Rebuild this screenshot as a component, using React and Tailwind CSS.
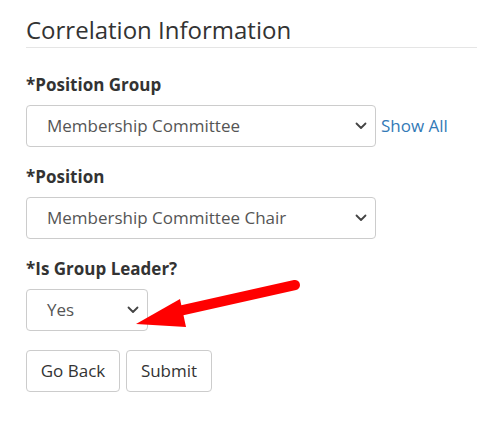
import React from 'react'

const Chevron = () => (
  <svg width="12" height="8" viewBox="0 0 12 8" className="absolute right-[8px] top-1/2 -translate-y-1/2">
    <path d="M1.5 1.5 L6 6 L10.5 1.5" fill="none" stroke="#444" strokeWidth="1.8" strokeLinecap="round" strokeLinejoin="round" />
  </svg>
)

const SelectBox = ({ value, width }) => (
  <div className={`relative h-[42px] ${width} rounded-[4px] border border-[#cccccc] bg-white flex items-center pl-[20px] text-[17px] text-[#555555]`}>
    {value}
    <Chevron />
  </div>
)

const Field = ({ label, children }) => (
  <div className="mb-[18px]">
    <div className="text-[17px] font-bold text-[#333333] leading-[24px] mb-[8px]">{label}</div>
    {children}
  </div>
)

export default function App() {
  return (
    <div className="relative w-[477px] h-[440px] bg-white pl-[26px] pt-[14px]" style={{ fontFamily: '"Open Sans", "Noto Sans", sans-serif' }}>
      <h2 className="text-[24px] font-normal text-[#333333] leading-[32px] pb-[1px] border-b border-[#e5e5e5]">
        Correlation Information
      </h2>
      <div className="pt-[25px]">
        <Field label="*Position Group">
          <div className="flex items-center">
            <SelectBox value="Membership Committee" width="w-[350px]" />
            <span className="ml-[5px] text-[17px] text-[#337ab7]">Show All</span>
          </div>
        </Field>
        <Field label="*Position">
          <SelectBox value="Membership Committee Chair" width="w-[350px]" />
        </Field>
        <Field label="*Is Group Leader?">
          <SelectBox value="Yes" width="w-[122px]" />
        </Field>
        <div className="flex gap-[6px] pt-[1px]">
          <button className="h-[42px] w-[94px] rounded-[4px] border border-[#cccccc] bg-white text-[17px] text-[#333333]">Go Back</button>
          <button className="h-[42px] w-[86px] rounded-[4px] border border-[#cccccc] bg-white text-[17px] text-[#333333]">Submit</button>
        </div>
      </div>
      <svg className="absolute left-0 top-0 pointer-events-none" width="477" height="440">
        <line x1="295" y1="285" x2="170" y2="313" stroke="#ff0000" strokeWidth="10" strokeLinecap="round" />
        <polygon points="136,324 180,299 186,327" fill="#ff0000" />
      </svg>
    </div>
  )
}
